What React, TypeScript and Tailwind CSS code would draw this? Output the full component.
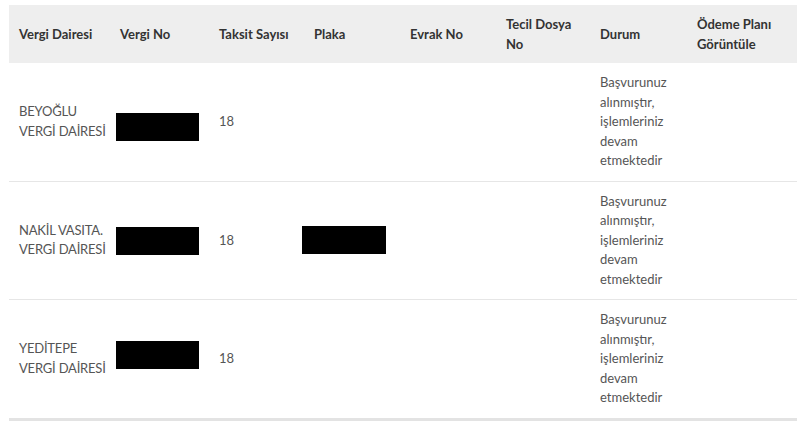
const rows = [
  { daire: ['BEYOĞLU', 'VERGİ DAİRESİ'], plaka: false, boxShift: 'mt-[10px]' },
  { daire: ['NAKİL VASITA.', 'VERGİ DAİRESİ'], plaka: true, boxShift: 'mt-[2px]' },
  { daire: ['YEDİTEPE', 'VERGİ DAİRESİ'], plaka: false, boxShift: 'mb-[8px]' },
];

const headers = ['Vergi Dairesi', 'Vergi No', 'Taksit Sayısı', 'Plaka', 'Evrak No', 'Tecil Dosya No', 'Durum', 'Ödeme Planı Görüntüle'];
const widths = ['w-[101px]', 'w-[99px]', 'w-[95px]', 'w-[96px]', 'w-[96px]', 'w-[94px]', 'w-[97px]', 'w-[110px]'];

export default function App() {
  return (
    <div className="min-h-screen bg-white pt-[5px] font-['Lato',sans-serif] text-[13px]">
      <table className="ml-[9px] w-[788px] table-fixed border-collapse">
        <colgroup>
          {widths.map((w, i) => (
            <col key={i} className={w} />
          ))}
        </colgroup>
        <thead>
          <tr className="bg-[#eeeeee]">
            {headers.map((h) => (
              <th key={h} className="py-[9px] pl-[10px] pr-1 text-left align-middle font-bold leading-5 text-[#333]">
                {h}
              </th>
            ))}
          </tr>
        </thead>
        <tbody className="border-b-[3px] border-[#e3e3e3]">
          {rows.map((r, i) => (
            <tr key={i} className="border-t border-[#e6e6e6] first:border-t-0 text-[#555]">
              <td className="whitespace-nowrap py-[10px] pl-[10px] align-middle leading-[19.5px] tracking-[-0.2px]">
                {r.daire[0]}
                <br />
                {r.daire[1]}
              </td>
              <td className="pl-[6px] align-middle">
                <div className={`h-[28px] w-[83px] bg-black ${r.boxShift}`} />
              </td>
              <td className="pl-[10px] align-middle">18</td>
              <td className="align-middle">
                {r.plaka && <div className="-ml-[2px] h-[28px] w-[84px] bg-black" />}
              </td>
              <td />
              <td />
              <td className="py-[10px] pl-[10px] pr-1 align-middle leading-[19.5px]">
                Başvurunuz alınmıştır, işlemleriniz devam etmektedir
              </td>
              <td />
            </tr>
          ))}
        </tbody>
      </table>
    </div>
  );
}
